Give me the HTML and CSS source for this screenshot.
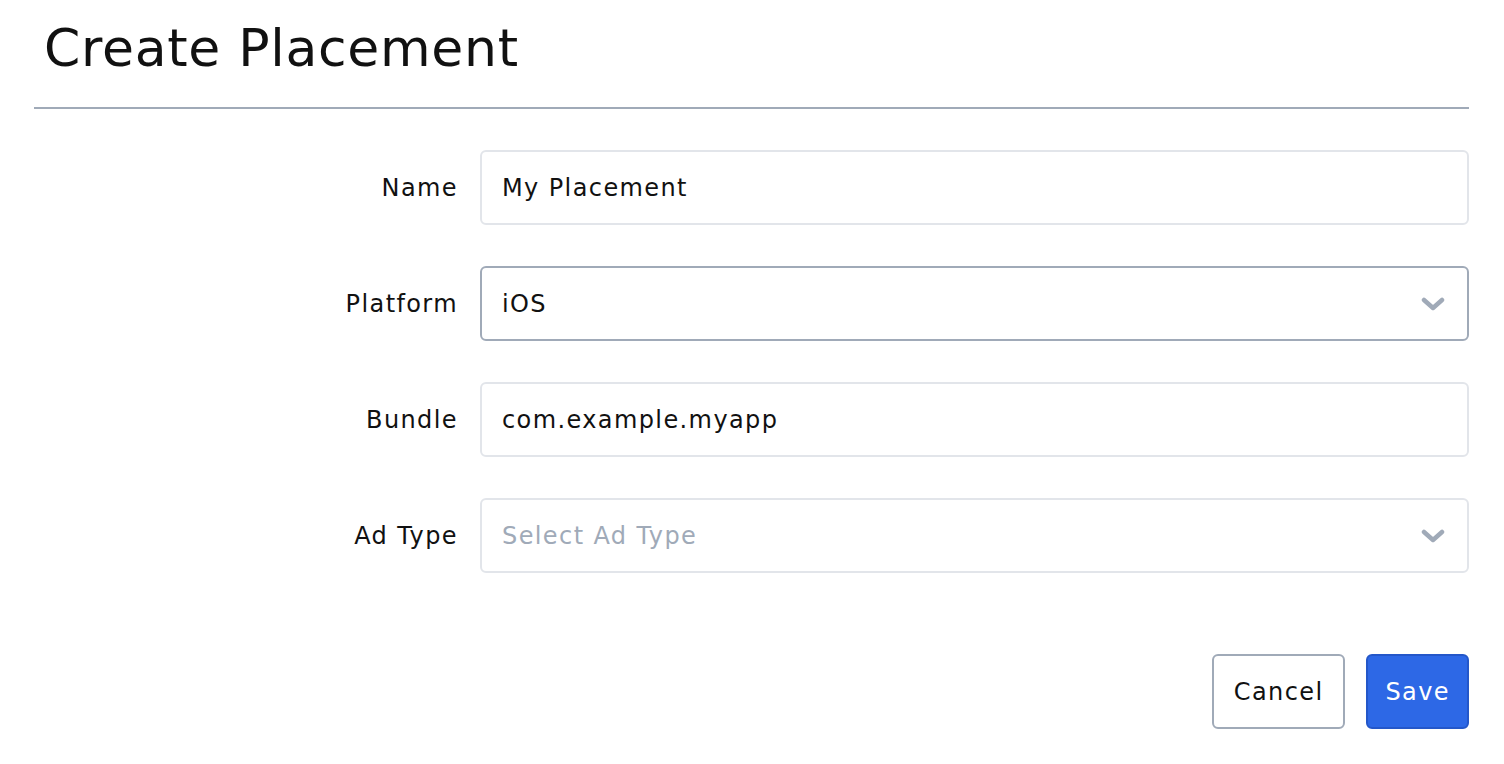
FILE: index.html
```html
<!DOCTYPE html>
<html lang="en">
<head>
    <meta charset="UTF-8">
    <meta name="viewport" content="width=device-width, initial-scale=1.0">
    <title>Create Placement</title>
    <link rel="stylesheet" href="styles.css">
</head>
<body>

    <div class="page">
        <h1>Create Placement</h1>

        <div class="form">
            <div class="form-row">
                <label for="name">Name</label>
                <input type="text" id="name" class="field" value="My Placement">
            </div>
            <div class="form-row">
                <label>Platform</label>
                <div class="field field-select field-active">
                    <span>iOS</span>
                    <svg class="chevron" viewBox="0 0 24 14" width="24" height="14">
                        <path d="M3 3l9 8 9-8" fill="none" stroke="currentColor" stroke-width="4.5" stroke-linecap="round" stroke-linejoin="round"/>
                    </svg>
                </div>
            </div>
            <div class="form-row">
                <label for="bundle">Bundle</label>
                <input type="text" id="bundle" class="field" value="com.example.myapp">
            </div>
            <div class="form-row">
                <label>Ad Type</label>
                <div class="field field-select">
                    <span class="placeholder">Select Ad Type</span>
                    <svg class="chevron" viewBox="0 0 24 14" width="24" height="14">
                        <path d="M3 3l9 8 9-8" fill="none" stroke="currentColor" stroke-width="4.5" stroke-linecap="round" stroke-linejoin="round"/>
                    </svg>
                </div>
            </div>
        </div>

        <div class="buttons">
            <button class="btn btn-cancel">Cancel</button>
            <button class="btn btn-save">Save</button>
        </div>
    </div>

</body>
</html>
```

FILE: styles.css
```css
body {
    margin: 0;
    font-family: "DejaVu Sans", sans-serif;
    background-color: white;
    color: #111;
}
.page {
    padding: 0 35px 0 34px;
}
h1 {
    font-size: 52px;
    font-weight: normal;
    margin: 0;
    padding: 17px 0 28px 10px;
    line-height: 62px;
    border-bottom: 2px solid #a0aab8;
    letter-spacing: 0.7px;
}
.form {
    display: flex;
    flex-direction: column;
    gap: 41px;
    padding-top: 41px;
}
.form-row {
    display: flex;
    align-items: center;
    gap: 22px;
}
.form-row label {
    width: 424px;
    text-align: right;
    font-size: 24px;
    letter-spacing: 1.4px;
}
.field {
    flex: 1;
    box-sizing: border-box;
    height: 75px;
    padding: 0 20px;
    border: 2px solid #e2e5ea;
    border-radius: 6px;
    font-family: inherit;
    font-size: 24px;
    letter-spacing: 1.4px;
    color: #111;
    background: white;
    outline: none;
}
.field-select {
    display: flex;
    align-items: center;
    justify-content: space-between;
    padding-right: 22px;
}
.field-active {
    border-color: #a0aab8;
}
.placeholder {
    color: #a0aab8;
}
.chevron {
    color: #a0aab8;
}
.buttons {
    display: flex;
    justify-content: flex-end;
    gap: 21px;
    margin-top: 81px;
}
.btn {
    box-sizing: border-box;
    height: 75px;
    font-family: inherit;
    font-size: 24px;
    letter-spacing: 1.4px;
    border-radius: 6px;
    cursor: pointer;
}
.btn-cancel {
    padding: 0 20px;
    background-color: white;
    color: #111;
    border: 2px solid #a0aab8;
}
.btn-save {
    padding: 0 17px;
    background-color: #2d68e6;
    color: white;
    border: 2px solid #2457c9;
}
```
